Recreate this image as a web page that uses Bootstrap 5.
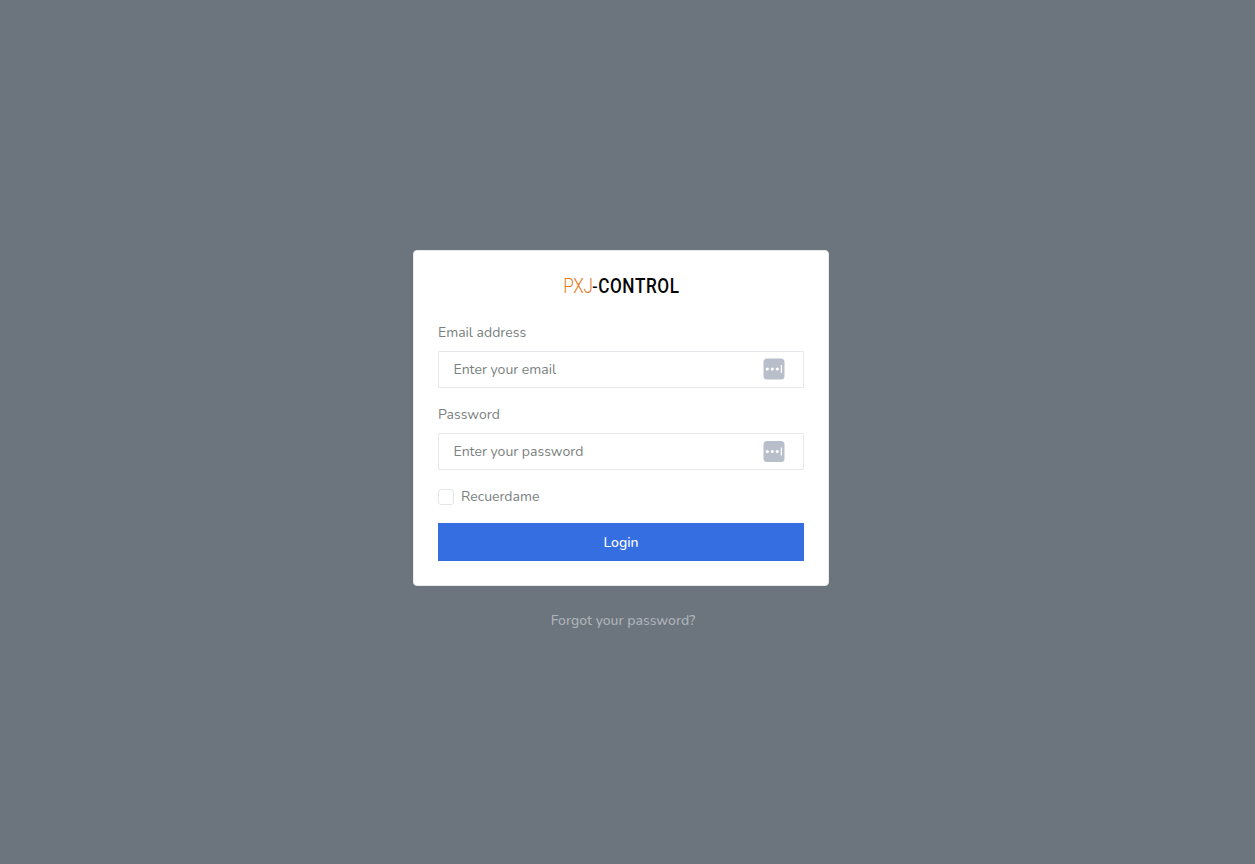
<!DOCTYPE html>
<html lang="en">
<head>
  <meta charset="UTF-8" />
  <meta name="viewport" content="width=device-width, initial-scale=1.0" />
  <title>PXJ-CONTROL | Login</title>
  <link href="https://cdn.jsdelivr.net/npm/bootstrap@5.3.0/dist/css/bootstrap.min.css" rel="stylesheet" />
  <style>
    body {
      background: #6c757e;
      color: #7a7f80;
      font-family: Nunito, Lato, "Open Sans", sans-serif;
      font-size: 14px;
      line-height: 21px;
    }
    .login-page { padding-top: 250px; padding-right: 13px; }
    .login-box { width: 416px; }
    .login-box .card { border-color: #e9ecef; border-radius: 4px; }
    .brand-logo {
      height: 23px;
      margin-bottom: 24px;
      color: #050505;
      font-family: Roboto, sans-serif;
      font-size: 19.5px;
      line-height: 23px;
      transform: scaleX(.88);
    }
    .brand-first { color: #e27a1c; font-weight: 300; letter-spacing: -.4px; }
    .brand-dash { margin: 0 1px 0 0; }
    .brand-last { font-weight: 500; letter-spacing: .65px; margin-right: -1px; }
    .login-input {
      height: 37px;
      padding: 0 15px 1px 14.5px;
      border: 1px solid #e6e8eb;
      border-radius: 1px;
      font-size: 14px;
      color: #6c757d;
    }
    .login-input::placeholder { color: #7a7f80; opacity: 1; }
    .fill-icon { top: 7px; right: 19px; width: 22px; height: 22px; }
    .login-check { min-height: 21px; }
    .login-check .form-check-input {
      width: 16px;
      height: 16px;
      margin: 0 7px 0 0;
      border-color: #e3e6ea;
      border-radius: 3px;
    }
    .btn-login {
      height: 38px;
      padding: 1px 0 0;
      border: 0;
      border-radius: 0;
      background: #346ee0;
      color: #fff;
      font-size: 14px;
      font-weight: 500;
    }
    .btn-login:hover { background: #2b62cf; color: #fff; }
    .forgot-link { color: #adb3b9; font-weight: 500; margin-left: 4px; }
  </style>
</head>
<body>

  <div class="login-page d-flex justify-content-center">
    <div class="login-box">
      <div class="card">
        <div class="card-body p-4">
          <div class="brand-logo d-flex justify-content-center">
            <span class="brand-first">PXJ</span><span class="brand-dash">-</span><span class="brand-last">CONTROL</span>
          </div>

          <form id="loginForm">
            <div class="mb-3">
              <label class="d-block mb-2" for="email">Email address</label>
              <div class="position-relative">
                <input type="email" class="form-control login-input" id="email" placeholder="Enter your email" />
                <svg class="fill-icon position-absolute" viewBox="0 0 22 22">
                  <rect x=".5" y=".5" width="21" height="21" rx="3.5" fill="#b8bfca" />
                  <g fill="#fff"><circle cx="4.3" cy="11" r="1.6" /><circle cx="9.3" cy="11" r="1.6" /><circle cx="14.3" cy="11" r="1.6" /><rect x="17.8" y="7" width="1.2" height="8" /></g>
                </svg>
              </div>
            </div>

            <div class="mb-3">
              <label class="d-block mb-2" for="password">Password</label>
              <div class="position-relative">
                <input type="password" class="form-control login-input" id="password" placeholder="Enter your password" />
                <svg class="fill-icon position-absolute" viewBox="0 0 22 22">
                  <rect x=".5" y="1" width="21" height="21" rx="3.5" fill="#b8bfca" />
                  <g fill="#fff"><circle cx="4.3" cy="11.5" r="1.6" /><circle cx="9.3" cy="11.5" r="1.6" /><circle cx="14.3" cy="11.5" r="1.6" /><rect x="17.8" y="7.5" width="1.2" height="8" /></g>
                </svg>
              </div>
            </div>

            <div class="login-check d-flex align-items-center mb-3">
              <input type="checkbox" class="form-check-input" id="remember" />
              <label for="remember">Recuerdame</label>
            </div>

            <button type="submit" class="btn btn-login d-block w-100">Login</button>
          </form>
        </div>
      </div>

      <div class="text-center mt-4">
        <a href="#" class="forgot-link text-decoration-none">Forgot your password?</a>
      </div>
    </div>
  </div>

  <script src="https://cdn.jsdelivr.net/npm/bootstrap@5.3.0/dist/js/bootstrap.bundle.min.js"></script>
</body>
</html>
